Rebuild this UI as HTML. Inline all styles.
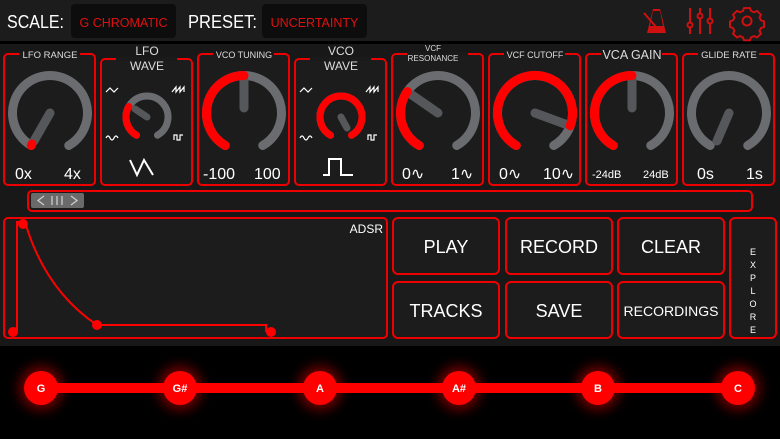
<!DOCTYPE html>
<html><head><meta charset="utf-8"><style>
html,body{margin:0;padding:0;background:#000;width:780px;height:439px;overflow:hidden}
svg{display:block}
text{font-family:"Liberation Sans",sans-serif}
</style></head><body>
<svg width="780" height="439" viewBox="0 0 780 439" xmlns="http://www.w3.org/2000/svg">
<defs>
<filter id="glow" x="-100%" y="-100%" width="300%" height="300%"><feGaussianBlur stdDeviation="6"/></filter>
</defs>
<rect width="780" height="439" fill="#000"/>
<rect width="780" height="41" fill="#1c1c1c"/>
<rect y="44" width="780" height="302" fill="#181818"/>
<!-- top bar -->
<text x="7" y="28" fill="#fff" font-size="18" textLength="57" lengthAdjust="spacingAndGlyphs">SCALE:</text>
<rect x="71" y="4" width="105" height="34" rx="4" fill="#0d0d0d"/>
<text x="123.5" y="27" fill="#e01010" font-size="12.5" text-anchor="middle">G CHROMATIC</text>
<text x="188" y="28" fill="#fff" font-size="18" textLength="69" lengthAdjust="spacingAndGlyphs">PRESET:</text>
<rect x="262" y="4" width="105" height="34" rx="4" fill="#0d0d0d"/>
<text x="314.5" y="27" fill="#e01010" font-size="12.5" text-anchor="middle">UNCERTAINTY</text>
<!-- icons -->
<g fill="none" stroke="#d01010" stroke-width="2">
<path d="M647 33 L653 9 L660 9 L666 33 Z" fill="#d01010" stroke="none"/>
<path d="M650 26 L653 11 L660 11 L663 26 Z" fill="#1c1c1c" stroke="none"/>
<line x1="644" y1="13" x2="657" y2="28"/>
<line x1="690" y1="8" x2="690" y2="34"/><circle cx="690" cy="25" r="2.5" fill="#1c1c1c"/>
<line x1="700" y1="8" x2="700" y2="34"/><circle cx="700" cy="16" r="2.5" fill="#1c1c1c"/>
<line x1="710" y1="8" x2="710" y2="34"/><circle cx="710" cy="21" r="2.5" fill="#1c1c1c"/>
<circle cx="747" cy="21" r="4.5"/>
<path d="M744 8 h6 l1 3 l3 1.5 l3-1.5 l4 4 l-1.5 3 l1.5 3 l3 1 v6 l-3 1 l-1.5 3 l1.5 3 l-4 4 l-3-1.5 l-3 1.5 l-1 3 h-6 l-1-3 l-3-1.5 l-3 1.5 l-4-4 l1.5-3 l-1.5-3 l-3-1 v-6 l3-1 l1.5-3 l-1.5-3 l4-4 l3 1.5 l3-1.5 z" transform="translate(0,-1) scale(1,0.95) translate(0,1.5)"/>
</g>

<!-- panels -->
<g fill="#1c1c1c" stroke="#e00" stroke-width="2">
<rect x="4" y="54" width="91" height="131" rx="4"/>
<rect x="101" y="59" width="91" height="126" rx="4"/>
<rect x="198" y="54" width="91" height="131" rx="4"/>
<rect x="295" y="59" width="91" height="126" rx="4"/>
<rect x="392" y="54" width="91" height="131" rx="4"/>
<rect x="489" y="54" width="91" height="131" rx="4"/>
<rect x="586" y="54" width="91" height="131" rx="4"/>
<rect x="683" y="54" width="91" height="131" rx="4"/>
</g>
<g fill="#1a1a1a">
<rect x="19" y="52" width="61" height="4"/>
<rect x="116" y="57" width="61" height="4"/>
<rect x="213" y="52" width="61" height="4"/>
<rect x="310" y="57" width="61" height="4"/>
<rect x="407" y="52" width="61" height="4"/>
<rect x="504" y="52" width="61" height="4"/>
<rect x="601" y="52" width="61" height="4"/>
<rect x="698" y="52" width="61" height="4"/>
</g>
<g fill="#ddd" text-anchor="middle">
<text x="50" y="58" font-size="9.5">LFO RANGE</text>
<text x="147" y="55" font-size="12">LFO</text><text x="147" y="70" font-size="12">WAVE</text>
<text x="244" y="58" font-size="9">VCO TUNING</text>
<text x="341" y="55" font-size="12">VCO</text><text x="341" y="70" font-size="12">WAVE</text>
<text x="433" y="51" font-size="8">VCF</text><text x="433" y="61" font-size="8">RESONANCE</text>
<text x="535" y="58" font-size="9">VCF CUTOFF</text>
<text x="632" y="59" font-size="12.5">VCA GAIN</text>
<text x="729" y="58" font-size="9.5">GLIDE RATE</text>
</g>

<!-- knobs -->
<g fill="none" stroke-linecap="round">
<g stroke="#6a6c70" stroke-width="9">
<path d="M31.25 145.5 A37.5 37.5 0 1 1 68.75 145.5"/>
<path d="M225.25 145.5 A37.5 37.5 0 1 1 262.75 145.5"/>
<path d="M419.25 145.5 A37.5 37.5 0 1 1 456.75 145.5"/>
<path d="M516.25 145.5 A37.5 37.5 0 1 1 553.75 145.5"/>
<path d="M613.25 145.5 A37.5 37.5 0 1 1 650.75 145.5"/>
<path d="M710.25 145.5 A37.5 37.5 0 1 1 747.75 145.5"/>
<path d="M136.5 135.2 A21 21 0 1 1 157.5 135.2" stroke-width="7"/>
<path d="M330.5 135.2 A21 21 0 1 1 351.5 135.2" stroke-width="7"/>
</g>
<g stroke="#55575a" stroke-width="9">
<line x1="50" y1="113" x2="34" y2="141"/>
<line x1="244" y1="108" x2="244" y2="80"/>
<line x1="438" y1="113" x2="412" y2="95"/>
<line x1="535" y1="113" x2="565" y2="124"/>
<line x1="632" y1="108" x2="632" y2="80"/>
<line x1="729" y1="113" x2="717" y2="141"/>
<line x1="147" y1="117" x2="135" y2="109" stroke-width="7"/>
<line x1="341" y1="117" x2="347" y2="128" stroke-width="7"/>
</g>
<g stroke="#ff0000" stroke-width="9">
<path d="M31.25 145.5 L32 144"/>
<path d="M225.25 145.5 A37.5 37.5 0 0 1 244 75.5"/>
<path d="M419.25 145.5 A37.5 37.5 0 0 1 407.3 91.5"/>
<path d="M516.25 145.5 A37.5 37.5 0 1 1 570.2 125.8"/>
<path d="M613.25 145.5 A37.5 37.5 0 0 1 632 75.5"/>
<path d="M136.5 135.2 A21 21 0 0 1 128.8 106.5" stroke-width="7"/>
<path d="M330.5 135.2 A21 21 0 1 1 351.5 135.2" stroke-width="7"/>
</g>
<g stroke="#fff" stroke-width="1.2" stroke-linecap="butt">
<path d="M106 92 l4-4 l4 4 l4-4"/><path d="M172 92 l4-5 v5 l4-5 v5 l4-5 v5"/>
<path d="M106 138 q2-4 4 0 q2 4 4 0 q2-4 4 0"/><path d="M174 140 v-5 h3 v5 h3 v-5 h3"/>
<path d="M300 92 l4-4 l4 4 l4-4"/><path d="M366 92 l4-5 v5 l4-5 v5 l4-5 v5"/>
<path d="M300 138 q2-4 4 0 q2 4 4 0 q2-4 4 0"/><path d="M368 140 v-5 h3 v5 h3 v-5 h3"/>
<path d="M130 160 l7 15 l7 -15 l9 15" stroke-width="2"/>
<path d="M323 175 h6 v-16 h12 v16 h12" stroke-width="2"/>
</g>
</g>
<g fill="#fff" font-size="16">
<text x="15" y="179">0x</text><text x="64" y="179">4x</text>
<text x="203" y="179">-100</text><text x="254" y="179">100</text>
<text x="402" y="179">0∿</text><text x="451" y="179">1∿</text>
<text x="499" y="179">0∿</text><text x="543" y="179">10∿</text>
<text x="592" y="178" font-size="11">-24dB</text><text x="643" y="178" font-size="11">24dB</text>
<text x="697" y="179">0s</text><text x="746" y="179">1s</text>
</g>

<rect x="28" y="191" width="724" height="20" rx="4" fill="#1a1a1a" stroke="#e00" stroke-width="2"/>
<rect x="31" y="193" width="53" height="15" rx="2" fill="#6a6a6a"/>
<g stroke="#ccc" stroke-width="1.3" fill="none"><path d="M44 196 l-6 4.5 l6 4.5"/><path d="M71 196 l6 4.5 l-6 4.5"/><path d="M52 196v9M57 196v9M62 196v9"/></g>

<rect x="4" y="218" width="383" height="120" rx="4" fill="#1c1c1c" stroke="#e00" stroke-width="2"/>
<text x="383" y="233" fill="#fff" font-size="12" text-anchor="end">ADSR</text>
<g stroke="#f00" stroke-width="2" fill="none">
<path d="M17 332 V222 H25 Q45 290 97 325 H266 V332"/>
</g>
<g fill="#f00"><circle cx="13" cy="332" r="5"/><circle cx="23" cy="224" r="5"/><circle cx="97" cy="325" r="5"/><circle cx="271" cy="332" r="5"/></g>

<g fill="#1c1c1c" stroke="#e00" stroke-width="2">
<rect x="393" y="218" width="106" height="56" rx="5"/>
<rect x="506" y="218" width="106" height="56" rx="5"/>
<rect x="618" y="218" width="106" height="56" rx="5"/>
<rect x="393" y="282" width="106" height="56" rx="5"/>
<rect x="506" y="282" width="106" height="56" rx="5"/>
<rect x="618" y="282" width="106" height="56" rx="5"/>
<rect x="730" y="218" width="46" height="120" rx="5"/>
</g>
<g fill="#fff" text-anchor="middle" font-size="18">
<text x="446" y="253">PLAY</text><text x="559" y="253">RECORD</text><text x="671" y="253">CLEAR</text>
<text x="446" y="317">TRACKS</text><text x="559" y="317">SAVE</text><text x="671" y="316" font-size="14">RECORDINGS</text>
</g>
<g fill="#fff" text-anchor="middle" font-size="9">
<text x="753" y="255">E</text><text x="753" y="268">X</text><text x="753" y="281">P</text><text x="753" y="294">L</text><text x="753" y="307">O</text><text x="753" y="320">R</text><text x="753" y="333">E</text>
</g>

<g fill="#a00000" filter="url(#glow)" opacity="0.7">
<circle cx="41" cy="388" r="22"/><circle cx="180" cy="388" r="22"/><circle cx="320" cy="388" r="22"/><circle cx="459" cy="388" r="22"/><circle cx="598" cy="388" r="22"/><circle cx="738" cy="388" r="22"/>
</g>
<rect x="41" y="383" width="697" height="10" fill="#ff0000"/>
<g fill="#ff0000">
<circle cx="41" cy="388" r="17"/><circle cx="180" cy="388" r="17"/><circle cx="320" cy="388" r="17"/><circle cx="459" cy="388" r="17"/><circle cx="598" cy="388" r="17"/><circle cx="738" cy="388" r="17"/>
</g>
<g fill="#fff" font-size="11" font-weight="bold" text-anchor="middle">
<text x="41" y="392">G</text><text x="180" y="392">G#</text><text x="320" y="392">A</text><text x="459" y="392">A#</text><text x="598" y="392">B</text><text x="738" y="392">C</text>
</g>
</svg>
</body></html>
